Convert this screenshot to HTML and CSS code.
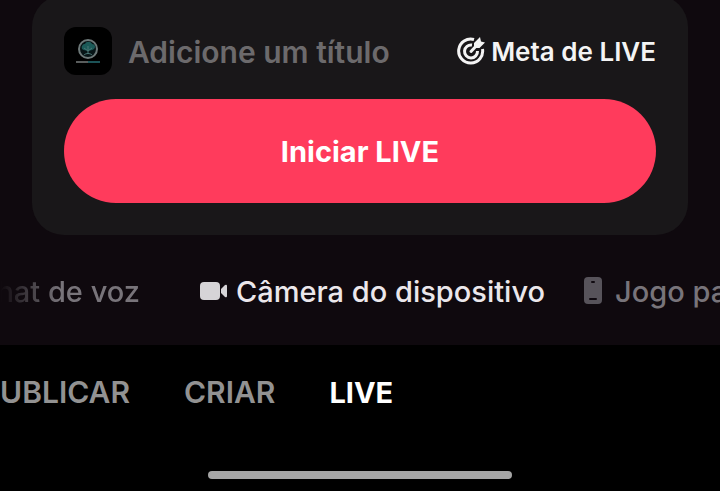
FILE: index.html
```html
<!DOCTYPE html>
<html lang="pt-BR">
<head>
    <meta charset="UTF-8">
    <meta name="viewport" content="width=device-width, initial-scale=1.0">
    <title>LIVE</title>
    <link rel="stylesheet" href="styles.css">
</head>
<body>
    <main class="stage">
        <form class="live-card">
            <div class="title-row">
                <svg class="avatar" viewBox="0 0 48 48" aria-hidden="true">
                    <rect width="48" height="48" rx="12" fill="#000"/>
                    <circle cx="24" cy="22" r="9" fill="#071416" stroke="#6d7878" stroke-width="2"/>
                    <path d="M18 22c-1-3 1-5 3-5 1-3 6-3 7 0 3 0 4 3 2 5-3 2-9 2-12 0z" fill="#1b5a58"/>
                    <path d="M24 19v8M20 28c2-2 6-2 8 0M20 21l4 3 4-3" fill="none" stroke="#4a7775" stroke-width="1"/>
                    <path d="M12 35h12" stroke="#5a5d5d" stroke-width="2"/>
                    <path d="M24 35h12" stroke="#1c5357" stroke-width="2"/>
                </svg>
                <input class="title-input" type="text" placeholder="Adicione um título" aria-label="Adicione um título">
                <button class="goal" type="button">
                    <svg class="goal-icon" viewBox="0 0 28 28" aria-hidden="true">
                        <g fill="none" stroke="#f4f4f4" stroke-width="3">
                            <path d="M17 2.500A12 12 0 1 0 25.500 12"/>
                            <path d="M15 8A6.500 6.500 0 1 0 20.500 14"/>
                            <path d="M14 14.500l7-7.500" stroke-linecap="round"/>
                        </g>
                        <path d="M17 11V6l6-6 1 4.500 4 1-5.500 5.500z" fill="#f4f4f4"/>
                    </svg>
                    Meta de LIVE
                </button>
            </div>
            <button class="start" type="button">Iniciar LIVE</button>
        </form>

        <div class="modes">
            <button class="mode mode-cut" type="button">Chat de voz</button>
            <button class="mode mode-active" type="button">
                <svg class="camera-icon" viewBox="0 0 28 20" aria-hidden="true">
                    <rect x="0" y="1" width="20" height="18" rx="4" fill="#d6d4d7"/>
                    <path d="M21 8l4-4q2-1 2 1v10q0 2-2 1l-4-4z" fill="#d6d4d7"/>
                </svg>
                Câmera do dispositivo
            </button>
            <button class="mode" type="button">
                <svg class="phone-icon" viewBox="0 0 20 28" aria-hidden="true">
                    <rect x="1" y="0" width="18" height="27" rx="4" fill="#57535a"/>
                    <path d="M9 5h2M7 22h6" stroke="#100a10" stroke-width="2" stroke-linecap="round"/>
                </svg>
                Jogo para celular
            </button>
        </div>
    </main>

    <nav class="tabs">
        <a class="tab tab-cut" href="#publicar">PUBLICAR</a>
        <a class="tab" href="#criar">CRIAR</a>
        <a class="tab tab-active" href="#live">LIVE</a>
    </nav>
    <div class="home-bar"></div>
</body>
</html>
```
FILE: styles.css
```css
* {
    box-sizing: border-box;
    margin: 0;
    padding: 0;
    font-family: Inter, "Liberation Sans", sans-serif;
}

body {
    background-color: #000;
    overflow: hidden;
}

button,
input {
    background: none;
    border: none;
    cursor: pointer;
}

.stage {
    background-color: #0f090e;
    display: flow-root;
}

.live-card {
    background-color: #191719;
    border-radius: 32px;
    margin: -5px 32px 0;
    padding: 32px;
}

.title-row {
    display: flex;
    align-items: center;
    margin-bottom: 24px;
}

.avatar {
    width: 48px;
    height: 48px;
    margin-right: 16px;
    flex: none;
}

.title-input {
    flex: 1;
    min-width: 0;
    height: 48px;
    padding-top: 2px;
    color: #fff;
    font-size: 30px;
    font-weight: 600;
}

.title-input::placeholder {
    color: #6c6a6c;
    opacity: 1;
}

.goal {
    display: flex;
    align-items: center;
    gap: 6px;
    color: #f4f4f4;
    font-size: 26px;
    font-weight: 600;
    white-space: nowrap;
}

.goal-icon {
    width: 28px;
    height: 28px;
}

.start {
    display: block;
    width: 100%;
    height: 104px;
    border-radius: 52px;
    background-color: #ff3b5c;
    color: #fff;
    font-size: 29px;
    font-weight: 700;
}

.modes {
    display: flex;
    height: 110px;
    padding-top: 2px;
    align-items: center;
    overflow: hidden;
    white-space: nowrap;
}

.mode {
    display: flex;
    align-items: center;
    flex: none;
    gap: 8px;
    margin-right: 38px;
    color: #78747a;
    font-size: 29px;
    font-weight: 500;
}

.mode-cut {
    width: 140px;
    margin-right: 60px;
    justify-content: flex-end;
    overflow: hidden;
    mask-image: linear-gradient(to right, transparent, #000 60px);
}

.mode-active {
    color: #ebe7eb;
}

.camera-icon {
    width: 28px;
    height: 20px;
}

.phone-icon {
    width: 20px;
    height: 28px;
    margin-right: 4px;
}

.tabs {
    display: flex;
    align-items: center;
    gap: 54px;
    height: 94px;
}

.tab {
    flex: none;
    color: #929292;
    font-size: 30px;
    font-weight: 600;
    text-decoration: none;
}

.tab-cut {
    display: flex;
    justify-content: flex-end;
    width: 130px;
    overflow: hidden;
}

.tab-active {
    color: #fff;
    font-size: 29px;
    font-weight: 700;
}

.home-bar {
    width: 304px;
    height: 8px;
    margin: 32px auto 16px;
    border-radius: 4px;
    background-color: #a5a5a5;
}
```
